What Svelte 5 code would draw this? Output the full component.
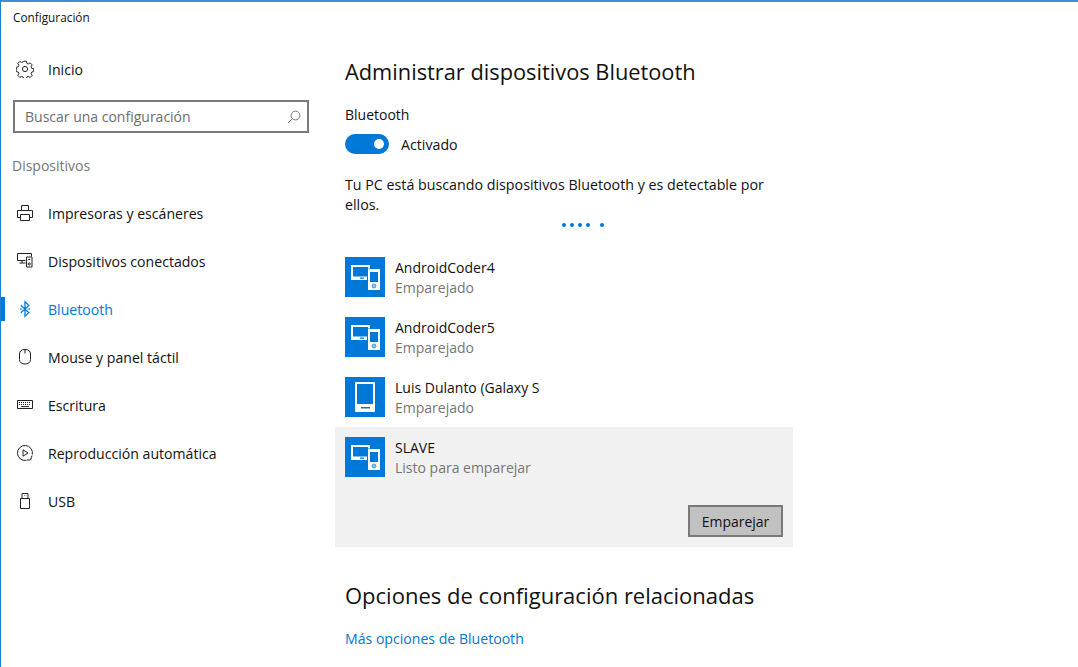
<script>
  const items = [
    { id: 'printer', label: 'Impresoras y escáneres' },
    { id: 'devices', label: 'Dispositivos conectados' },
    { id: 'bt', label: 'Bluetooth', active: true },
    { id: 'mouse', label: 'Mouse y panel táctil' },
    { id: 'kbd', label: 'Escritura' },
    { id: 'auto', label: 'Reproducción automática' },
    { id: 'usb', label: 'USB' }
  ];
  const devices = [
    { icon: 'multi', name: 'AndroidCoder4', status: 'Emparejado' },
    { icon: 'multi', name: 'AndroidCoder5', status: 'Emparejado' },
    { icon: 'phone', name: 'Luis Dulanto (Galaxy S', status: 'Emparejado' },
    { icon: 'multi', name: 'SLAVE', status: 'Listo para emparejar', selected: true }
  ];
</script>

<div class="window">
  <div class="titlebar">Configuración</div>
  <div class="body">
    <aside class="side">
      <div class="row home">
        <svg class="ico" viewBox="0 0 18 18" fill="none" stroke="#222" stroke-width="1">
          <circle cx="9" cy="9" r="2.6"/>
          <path d="M7.6 1.2h2.8l.4 2.1 1.5.7 1.9-1.1 2 2-1.1 1.9.6 1.500 2.100.5v2.800l-2.100.5-.6 1.500 1.100 1.900-2 2-1.900-1.100-1.500.6-.4 2.100H7.600l-.4-2.100-1.500-.6-1.900 1.100-2-2 1.100-1.900-.6-1.500-2.100-.5V7.300l2.100-.5.6-1.500-1.100-1.900 2-2 1.900 1.100 1.500-.7z"/>
        </svg>
        <span>Inicio</span>
      </div>
      <div class="search">
        <span>Buscar una configuración</span>
        <svg viewBox="0 0 14 14" fill="none" stroke="#777" stroke-width="1"><circle cx="8.5" cy="5.5" r="4.4"/><path d="M5.4 8.6L1 13"/></svg>
      </div>
      <div class="group">Dispositivos</div>
      <nav>
        {#each items as it}
          <div class="row" class:active={it.active}>
            <svg class="ico" viewBox="0 0 18 18" fill="none" stroke="currentColor" stroke-width="1">
              {#if it.id === 'printer'}
                <path d="M5.500 6.500V1.500h7v5M4.500 13.500H1.500v-7h15v7h-3M4.500 10.500h9v6h-9z"/>
              {:else if it.id === 'devices'}
                <path d="M9.500 8.500H1.500v-7h14v3M6 8.500v2.500M3.500 11h6M10.500 5h5.500v10h-5.500z"/>
                <circle cx="13.200" cy="12" r="1.100"/><path d="M12.200 7.500h2"/>
              {:else if it.id === 'bt'}
                <path d="M4.800 5.200l8 7.400-3.800 3.700V1.700l3.800 3.700-8 7.400" stroke-width="1.300"/>
                <path d="M4 9h1.500M12.500 9H14" stroke-width="1.500"/>
              {:else if it.id === 'mouse'}
                <path d="M9 1.500c3.500 0 5.500 1.500 5.500 4.500v5.500c0 3-2.500 4.500-5.500 4.500s-5.500-1.500-5.500-4.500V6c0-3 2-4.500 5.500-4.500zM9 1.500v4"/>
              {:else if it.id === 'kbd'}
                <path d="M1.500 4.500h15v8h-15z"/>
                <path d="M3 6.500h12M3 8.500h12" stroke-dasharray="1 1"/><path d="M5 10.600h8" />
              {:else if it.id === 'auto'}
                <path d="M10.500 16.300A7.500 7.500 0 1 1 16.300 10.500M16 11.500l-1.500 4.500h-3.500"/>
                <path d="M7 5.800l5 3.200-5 3.200z"/>
              {:else}
                <path d="M4.500 6.500h9v10h-9zM6 6.500V1.500h6v5M8 3.500h.5M9.800 3.500h.5"/>
              {/if}
            </svg>
            <span>{it.label}</span>
          </div>
        {/each}
      </nav>
    </aside>

    <main class="main">
      <h1>Administrar dispositivos Bluetooth</h1>
      <div class="label">Bluetooth</div>
      <div class="toggle-row">
        <div class="toggle"><i></i></div>
        <span>Activado</span>
      </div>
      <p class="desc">Tu PC está buscando dispositivos Bluetooth y es detectable por ellos.</p>
      <div class="dots"><i></i><i></i><i></i><i></i><i class="last"></i></div>
      <div class="list">
        {#each devices as d}
          <div class="device" class:selected={d.selected}>
            <div class="info">
              <div class="tile">
                {#if d.icon === 'multi'}
                  <svg viewBox="0 0 40 40">
                    <path fill="#fff" fill-rule="evenodd" d="M6 8h19v3.500h-2V10H8v9.500h14V23H6zM15 20.500v1.200h4v-1.200z"/>
                    <path fill="#fff" fill-rule="evenodd" d="M23 12h12v21H23zM25 15v10h8V15z"/>
                    <circle cx="29" cy="29" r="2" fill="#8ec3ee" stroke="#0078d7" stroke-width=".6"/>
                  </svg>
                {:else}
                  <svg viewBox="0 0 40 40">
                    <path fill="#fff" fill-rule="evenodd" d="M11 5h18a1 1 0 0 1 1 1v28a1 1 0 0 1-1 1H11a1 1 0 0 1-1-1V6a1 1 0 0 1 1-1zM12 7v20h16V7z"/>
                    <path fill="#0078d7" d="M16 30h9v1.500h-9z"/>
                  </svg>
                {/if}
              </div>
              <div class="text">
                <div class="name">{d.name}</div>
                <div class="status">{d.status}</div>
              </div>
            </div>
            {#if d.selected}
              <div class="actions"><button>Emparejar</button></div>
            {/if}
          </div>
        {/each}
      </div>
      <h2>Opciones de configuración relacionadas</h2>
      <a class="link" href="#more">Más opciones de Bluetooth</a>
    </main>
  </div>
</div>

<style>
  :global(body) {
    margin: 0;
    background: #fff;
    overflow: hidden;
  }
  .window {
    height: 667px;
    box-sizing: border-box;
    border-left: 1px solid #1683d8;
    border-top: 2px solid #3b8fd4;
    font-family: "Open Sans", "Noto Sans", sans-serif;
    font-size: 14px;
    color: #111;
    overflow: hidden;
    position: relative;
    background: #fff;
  }
  .titlebar {
    height: 29px;
    padding-left: 12px;
    font-size: 11.800px;
    line-height: 30px;
  }
  .body {
    display: flex;
  }
  .side {
    width: 334px;
    flex: none;
  }
  .row {
    height: 48px;
    display: flex;
    align-items: center;
    padding-left: 15px;
    gap: 14px;
    position: relative;
    color: #111;
    font-size: 14.100px;
  }
  .row.active {
    color: #0078d7;
  }
  .row.active::before {
    content: "";
    position: absolute;
    left: 0;
    top: 12px;
    width: 4px;
    height: 24px;
    background: #0078d7;
  }
  .home {
    margin-top: 14px;
  }
  .ico {
    width: 18px;
    height: 18px;
    flex: none;
    color: #222;
  }
  .active .ico {
    color: #0078d7;
  }
  .search {
    margin: 7px 0 0 12px;
    width: 296px;
    height: 33px;
    box-sizing: border-box;
    border: 2px solid #7a7a7a;
    display: flex;
    align-items: center;
    justify-content: space-between;
    padding: 0 6px 0 10px;
    color: #6d6d6d;
  }
  .search svg {
    width: 14px;
    height: 14px;
  }
  .group {
    margin: 23px 0 0 11px;
    color: #767676;
    height: 25px;
    line-height: 20px;
  }
  nav {
    margin-top: 8px;
  }
  .main {
    flex: 1;
    padding-left: 10px;
  }
  h1, h2 {
    margin: 0;
    font-weight: 400;
    font-size: 22px;
    color: #111;
    line-height: 30px;
  }
  h1 {
    margin-top: 26px;
    font-size: 21.800px;
  }
  .label {
    margin-top: 18px;
    line-height: 20px;
  }
  .toggle-row {
    margin-top: 9px;
    display: flex;
    align-items: center;
    gap: 12px;
    height: 20px;
    font-size: 14.200px;
  }
  .toggle {
    width: 44px;
    height: 20px;
    border-radius: 10px;
    background: #0078d7;
    position: relative;
  }
  .toggle i {
    position: absolute;
    right: 5px;
    top: 5px;
    width: 10px;
    height: 10px;
    border-radius: 50%;
    background: #fff;
  }
  .desc {
    margin: 21px 0 0;
    width: 430px;
    line-height: 20px;
    font-size: 14.250px;
  }
  .dots {
    margin: 8px 0 0 217px;
    display: flex;
    gap: 4px;
    height: 4px;
  }
  .dots i {
    width: 4px;
    height: 4px;
    border-radius: 50%;
    background: #0078d7;
  }
  .dots i.last {
    margin-left: 6px;
  }
  .list {
    margin: 20px 0 0 -10px;
    width: 458px;
  }
  .device {
    padding: 10px 10px;
  }
  .device.selected {
    background: #f1f1f1;
    height: 120px;
    box-sizing: border-box;
    position: relative;
  }
  .info {
    display: flex;
    gap: 10px;
    height: 40px;
  }
  .tile {
    width: 40px;
    height: 40px;
    background: #0078d7;
    flex: none;
  }
  .tile svg {
    display: block;
    width: 40px;
    height: 40px;
  }
  .text {
    margin-top: 1px;
  }
  .name, .status {
    line-height: 20px;
  }
  .status {
    color: #767676;
  }
  .actions {
    display: flex;
    justify-content: flex-end;
    margin-top: 28px;
  }
  button {
    width: 95px;
    height: 32px;
    background: #c1c1c1;
    border: 2px solid #7a7a7a;
    font: inherit;
    color: #111;
    padding: 0;
  }
  h2 {
    margin-top: 33px;
  }
  .link {
    display: block;
    margin-top: 19px;
    color: #0078d7;
    text-decoration: none;
    line-height: 20px;
    font-size: 14.100px;
  }
  .window::before {
    content: "";
    position: absolute;
    left: -1px;
    right: 0;
    top: -2px;
    height: 1px;
    background: repeating-linear-gradient(90deg, #8fb4d4 0 56px, #6a6a9a 56px 57px, #8fb4d4 57px 60px, #6a6a9a 60px 61px, #8fb4d4 61px 63px, #6a6a9a 63px 65px, #8fb4d4 65px 100px);
  }
</style>
